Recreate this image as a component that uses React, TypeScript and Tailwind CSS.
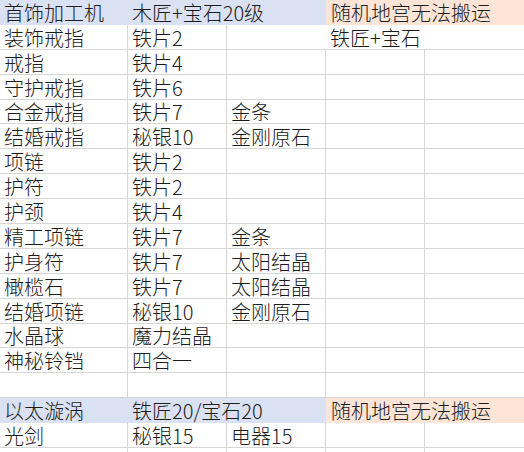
type Row = {
  cells?: string[];
  header?: [string, string, string];
  noLines?: number[];
};

const rows: Row[] = [
  { header: ['首饰加工机', '木匠+宝石20级', '随机地宫无法搬运'] },
  { cells: ['装饰戒指', '铁片2', '', '铁匠+宝石', ''], noLines: [2, 3] },
  { cells: ['戒指', '铁片4', '', '', ''] },
  { cells: ['守护戒指', '铁片6', '', '', ''] },
  { cells: ['合金戒指', '铁片7', '金条', '', ''] },
  { cells: ['结婚戒指', '秘银10', '金刚原石', '', ''] },
  { cells: ['项链', '铁片2', '', '', ''] },
  { cells: ['护符', '铁片2', '', '', ''] },
  { cells: ['护颈', '铁片4', '', '', ''] },
  { cells: ['精工项链', '铁片7', '金条', '', ''] },
  { cells: ['护身符', '铁片7', '太阳结晶', '', ''] },
  { cells: ['橄榄石', '铁片7', '太阳结晶', '', ''] },
  { cells: ['结婚项链', '秘银10', '金刚原石', '', ''] },
  { cells: ['水晶球', '魔力结晶', '', '', ''] },
  { cells: ['神秘铃铛', '四合一', '', '', ''] },
  { cells: ['', '', '', '', ''] },
  { header: ['以太漩涡', '铁匠20/宝石20', '随机地宫无法搬运'] },
  { cells: ['光剑', '秘银15', '电器15', '', ''] },
  { cells: ['', '', '', '', ''] },
];

const widths = ['w-[128px]', 'w-[99px]', 'w-[99px]', 'w-[99px]', 'w-[99px]'];

function SheetRow({ row }: { row: Row }) {
  if (row.header) {
    const [a, b, c] = row.header;
    return (
      <div className="flex h-[24.9px] w-[524px]">
        <div className="flex w-[326px] items-end bg-[#d9e1f2] pb-[1px]">
          <div className="w-[128px] pl-[4px]">{a}</div>
          <div className="whitespace-nowrap pl-[4px]">{b}</div>
        </div>
        <div className="flex flex-1 items-end whitespace-nowrap bg-[#fce4d6] pb-[1px] pl-[5px]">{c}</div>
      </div>
    );
  }
  return (
    <div className="flex h-[24.9px] w-[524px]">
      {row.cells!.map((text, i) => (
        <div
          key={i}
          className={`${widths[i]} flex shrink-0 items-end whitespace-nowrap border-b border-[#d6d6d6] pl-[4px] ${
            row.noLines?.includes(i) || i === 4 ? '' : 'border-r'
          }`}
        >
          {text}
        </div>
      ))}
    </div>
  );
}

export default function App() {
  return (
    <div
      className="h-[452px] w-[524px] overflow-hidden bg-white text-[20px] font-light leading-[22px] text-[#1c1c1c]"
      style={{ fontFamily: '"Noto Sans CJK SC", "Noto Sans", sans-serif' }}
    >
      {rows.map((row, i) => (
        <SheetRow key={i} row={row} />
      ))}
    </div>
  );
}
